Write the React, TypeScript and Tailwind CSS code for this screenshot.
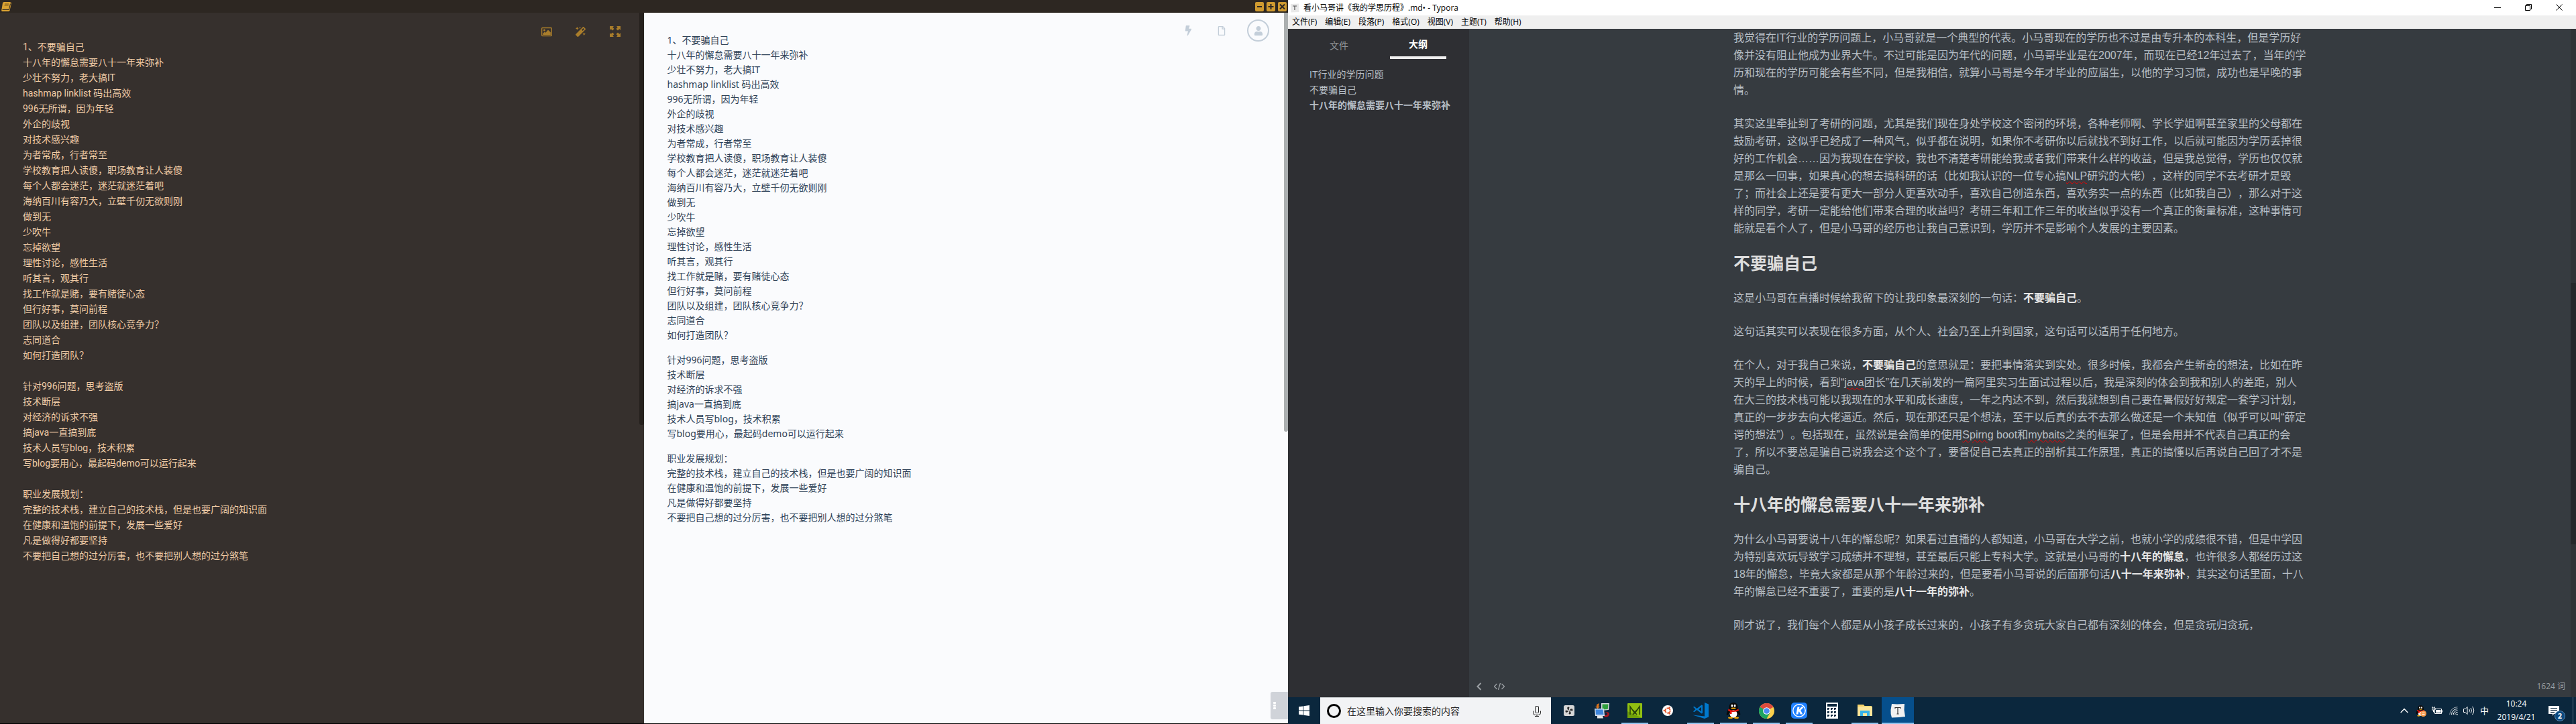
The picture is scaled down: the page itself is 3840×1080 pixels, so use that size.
import type { ReactNode } from "react";
import { FaBolt, FaMagic, FaRegFile, FaUser } from "react-icons/fa";

const noteGroups: string[][] = [
  [
    "1、不要骗自己",
    "十八年的懈怠需要八十一年来弥补",
    "少壮不努力，老大搞IT",
    "hashmap linklist 码出高效",
    "996无所谓，因为年轻",
    "外企的歧视",
    "对技术感兴趣",
    "为者常成，行者常至",
    "学校教育把人读傻，职场教育让人装傻",
    "每个人都会迷茫，迷茫就迷茫着吧",
    "海纳百川有容乃大，立壁千仞无欲则刚",
    "做到无",
    "少吹牛",
    "忘掉欲望",
    "理性讨论，感性生活",
    "听其言，观其行",
    "找工作就是赌，要有赌徒心态",
    "但行好事，莫问前程",
    "团队以及组建，团队核心竞争力？",
    "志同道合",
    "如何打造团队？",
  ],
  [
    "针对996问题，思考盗版",
    "技术断层",
    "对经济的诉求不强",
    "搞java一直搞到底",
    "技术人员写blog，技术积累",
    "写blog要用心，最起码demo可以运行起来",
  ],
  [
    "职业发展规划：",
    "完整的技术栈，建立自己的技术栈，但是也要广阔的知识面",
    "在健康和温饱的前提下，发展一些爱好",
    "凡是做得好都要坚持",
    "不要把自己想的过分厉害，也不要把别人想的过分煞笔",
  ],
];

const noteText = noteGroups.map((group) => group.join("\n")).join("\n\n");

const IconButton = ({ label, className = "", children }: { label: string; className?: string; children: ReactNode }) => (
  <button type="button" aria-label={label} className={`flex items-center justify-center ${className}`}>
    {children}
  </button>
);

function PictureIcon() {
  return (
    <svg viewBox="0 0 18 15" className="h-[15px] w-[18px]" fill="currentColor">
      <rect x="0.75" y="0.75" width="16.5" height="13.5" rx="1.2" fill="none" stroke="currentColor" strokeWidth="1.5" />
      <circle cx="5" cy="4.8" r="1.7" />
      <path d="M2.6 12.5V10l3-2.6 1.6 1.4 4-4.6 4.4 4.2v4.1z" />
    </svg>
  );
}

function ExpandIcon() {
  return (
    <svg viewBox="0 0 16 16" className="size-[16px]" fill="currentColor">
      <path d="M0 0h6L4.300 1.700 6.500 4 4 6.500 1.700 4.300 0 6zM16 0v6l-1.700-1.700L12 6.500 9.500 4l2.200-2.300L10 0zM0 16v-6l1.700 1.700L4 9.500 6.500 12l-2.200 2.300L6 16zM16 16h-6l1.700-1.700L9.500 12 12 9.500l2.300 2.200L16 10z" />
    </svg>
  );
}

function NotesWindow() {
  return (
    <section className="flex min-w-0 flex-1 flex-col border-b border-black bg-[#2d2722]">
      <header className="flex h-[19px] shrink-0 items-center justify-between px-[2px]">
        <svg viewBox="0 0 15 14" className="h-[14px] w-[15px]" aria-hidden="true">
          <path d="M4 0h8.500l2.500 1-2.500 12-1.500 1H1.500Q0 14 .2 12.500L2 1.500Q2.300 0 4 0z" fill="#d9a233" />
          <path d="M5 3h6M4.600 5h6" stroke="#7b5a20" strokeWidth="1" />
          <path d="M1.500 11.500h10l2-9" stroke="#2d2722" strokeWidth="1" fill="none" />
        </svg>
        <div className="flex gap-[4px]">
          {[
            { label: "最小化", d: "M3 7h7" },
            { label: "最大化", d: "M2.500 7h8M6.500 3v8" },
            { label: "关闭", d: "M3 3.500l7 7M10 3.500l-7 7" },
          ].map((control) => (
            <IconButton key={control.label} label={control.label} className="h-[14px] w-[13px] rounded-[2px] bg-[#cf9a30]">
              <svg viewBox="0 0 13 14" className="h-[14px] w-[13px]">
                <path d={control.d} stroke="#2d2722" strokeWidth="2" fill="none" />
              </svg>
            </IconButton>
          ))}
        </div>
      </header>

      <div className="flex min-h-0 flex-1">
        <div className="relative flex flex-1 bg-[#36302d]">
          <textarea
            aria-label="编辑笔记"
            defaultValue={noteText}
            spellCheck={false}
            className="flex-1 resize-none overflow-hidden bg-transparent pt-[40px] pl-[34px] font-[Roboto,'Noto_Sans_CJK_SC',sans-serif] text-[14px] leading-[23px] text-[#efcba6] outline-none"
          />
          <div className="absolute top-[20px] right-[35px] flex gap-[35px] text-[#a97d2b]">
            <IconButton label="插入图片" className="w-[16px]">
              <PictureIcon />
            </IconButton>
            <IconButton label="格式化" className="w-[16px]">
              <FaMagic className="size-[15px]" />
            </IconButton>
            <IconButton label="全屏" className="w-[16px]">
              <ExpandIcon />
            </IconButton>
          </div>
          <div className="w-[7px]">
            <div className="h-[58%] rounded-b bg-[#25211e]" />
          </div>
        </div>

        <div className="relative flex flex-1 border-l border-[#e6edfb] bg-[#fafbfd]">
          <div className="flex flex-1 flex-col gap-[15px] pt-[30px] pl-[34px] font-['Noto_Sans','Noto_Sans_CJK_SC',sans-serif] text-[14px] leading-[22px] text-[#2f4257]">
            {noteGroups.map((group) => (
              <p key={group[0]}>
                {group.map((line) => (
                  <span key={line} className="block whitespace-nowrap">
                    {line}
                  </span>
                ))}
              </p>
            ))}
          </div>
          <div className="absolute top-[10px] right-[28px] flex items-center text-[#c3ced9]">
            <IconButton label="快捷操作" className="w-[50px]">
              <FaBolt className="h-[15px] w-[13px]" />
            </IconButton>
            <IconButton label="新建文件" className="w-[50px]">
              <FaRegFile className="h-[14px] w-[12px]" />
            </IconButton>
            <IconButton label="账户" className="ml-[13px] size-[33px] rounded-full border-2 border-[#c3ced9]">
              <FaUser className="size-[14px]" />
            </IconButton>
          </div>
          <div className="w-[6px]">
            <div className="h-[59%] rounded-b bg-[#abafb0]" />
          </div>
          <button
            type="button"
            aria-label="目录"
            className="absolute right-0 bottom-[6px] flex h-[41px] w-[26px] flex-col items-start justify-center gap-px rounded-l-[3px] bg-[#d0d3d9] pl-[4px]"
          >
            {[0, 1, 2].map((dot) => (
              <span key={dot} className="h-[3px] w-[4px] rounded-[1px] bg-white" />
            ))}
          </button>
        </div>
      </div>
    </section>
  );
}

const B = ({ children }: { children: ReactNode }) => <strong className="font-bold text-[#e6e6e6]">{children}</strong>;

const Misspelt = ({ children }: { children: ReactNode }) => (
  <span className="underline decoration-[#f00000] decoration-wavy decoration-1 underline-offset-2">{children}</span>
);

const Paragraph = ({ lines }: { lines: ReactNode[] }) => (
  <p>
    {lines.map((line, index) => (
      <span key={index} className="block whitespace-nowrap">
        {line}
      </span>
    ))}
  </p>
);

const Heading = ({ id, children }: { id: string; children: ReactNode }) => (
  <h2 id={id} className="text-[25px] leading-[30px] font-bold text-[#dedede]">
    {children}
  </h2>
);

function Article() {
  return (
    <article
      id="it"
      className="mx-auto flex w-full max-w-[914px] flex-col gap-[24px] px-[30px] pt-px font-['Liberation_Sans','Noto_Sans_CJK_SC',sans-serif] text-[16px] leading-[26px] text-[#b8bfc6]"
    >
      <Paragraph
        lines={[
          "我觉得在IT行业的学历问题上，小马哥就是一个典型的代表。小马哥现在的学历也不过是由专升本的本科生，但是学历好",
          "像并没有阻止他成为业界大牛。不过可能是因为年代的问题，小马哥毕业是在2007年，而现在已经12年过去了，当年的学",
          "历和现在的学历可能会有些不同，但是我相信，就算小马哥是今年才毕业的应届生，以他的学习习惯，成功也是早晚的事",
          "情。",
        ]}
      />
      <Paragraph
        lines={[
          "其实这里牵扯到了考研的问题，尤其是我们现在身处学校这个密闭的环境，各种老师啊、学长学姐啊甚至家里的父母都在",
          "鼓励考研，这似乎已经成了一种风气，似乎都在说明，如果你不考研你以后就找不到好工作，以后就可能因为学历丢掉很",
          "好的工作机会……因为我现在在学校，我也不清楚考研能给我或者我们带来什么样的收益，但是我总觉得，学历也仅仅就",
          <>
            是那么一回事，如果真心的想去搞科研的话（比如我认识的一位专心搞<Misspelt>NLP</Misspelt>研究的大佬），这样的同学不去考研才是毁
          </>,
          "了；而社会上还是要有更大一部分人更喜欢动手，喜欢自己创造东西，喜欢务实一点的东西（比如我自己），那么对于这",
          "样的同学，考研一定能给他们带来合理的收益吗？考研三年和工作三年的收益似乎没有一个真正的衡量标准，这种事情可",
          "能就是看个人了，但是小马哥的经历也让我自己意识到，学历并不是影响个人发展的主要因素。",
        ]}
      />
      <Heading id="honest">不要骗自己</Heading>
      <Paragraph
        lines={[
          <>
            这是小马哥在直播时候给我留下的让我印象最深刻的一句话：<B>不要骗自己</B>。
          </>,
        ]}
      />
      <Paragraph lines={["这句话其实可以表现在很多方面，从个人、社会乃至上升到国家，这句话可以适用于任何地方。"]} />
      <Paragraph
        lines={[
          <>
            在个人，对于我自己来说，<B>不要骗自己</B>的意思就是：要把事情落实到实处。很多时候，我都会产生新奇的想法，比如在昨
          </>,
          <>
            天的早上的时候，看到“<Misspelt>java</Misspelt>团长”在几天前发的一篇阿里实习生面试过程以后，我是深刻的体会到我和别人的差距，别人
          </>,
          "在大三的技术栈可能以我现在的水平和成长速度，一年之内达不到，然后我就想到自己要在暑假好好规定一套学习计划，",
          "真正的一步步去向大佬逼近。然后，现在那还只是个想法，至于以后真的去不去那么做还是一个未知值（似乎可以叫“薛定",
          <>
            谔的想法”）。包括现在，虽然说是会简单的使用<Misspelt>Spirng</Misspelt> boot和<Misspelt>mybaits</Misspelt>
            之类的框架了，但是会用并不代表自己真正的会
          </>,
          "了，所以不要总是骗自己说我会这个这个了，要督促自己去真正的剖析其工作原理，真正的搞懂以后再说自己回了才不是",
          "骗自己。",
        ]}
      />
      <Heading id="effort">十八年的懈怠需要八十一年来弥补</Heading>
      <Paragraph
        lines={[
          "为什么小马哥要说十八年的懈怠呢？如果看过直播的人都知道，小马哥在大学之前，也就小学的成绩很不错，但是中学因",
          <>
            为特别喜欢玩导致学习成绩并不理想，甚至最后只能上专科大学。这就是小马哥的<B>十八年的懈怠</B>，也许很多人都经历过这
          </>,
          <>
            18年的懈怠，毕竟大家都是从那个年龄过来的，但是要看小马哥说的后面那句话<B>八十一年来弥补</B>，其实这句话里面，十八
          </>,
          <>
            年的懈怠已经不重要了，重要的是<B>八十一年的弥补</B>。
          </>,
        ]}
      />
      <Paragraph lines={["刚才说了，我们每个人都是从小孩子成长过来的，小孩子有多贪玩大家自己都有深刻的体会，但是贪玩归贪玩，"]} />
    </article>
  );
}

function TyporaWindow() {
  return (
    <section className="flex min-h-0 flex-1 flex-col bg-white font-['Open_Sans','Noto_Sans_CJK_SC',sans-serif]">
      <header className="flex h-[23px] shrink-0 items-center justify-between pl-[3px] text-[12px] text-black">
        <div className="flex items-center gap-[6px]">
          <svg viewBox="0 0 14 14" className="size-[14px]" aria-hidden="true">
            <path d="M1 1l12-.5L13.500 13l-12 .5z" fill="#e9e9e9" />
            <path d="M4 4h6M7 4v6" stroke="#555" strokeWidth="1.200" />
          </svg>
          <h1>看小马哥讲《我的学思历程》.md• - Typora</h1>
        </div>
        <div className="flex pr-[2px] pb-[2px]">
          {[
            { label: "最小化", d: "M0 5.500h10" },
            { label: "还原", d: "M.5 2.500h7v7h-7zM2.500 2.500v-2h7v7h-2" },
            { label: "关闭", d: "M.5 .5l9 9M9.500 .5l-9 9" },
          ].map((control) => (
            <IconButton key={control.label} label={control.label} className="h-[20px] w-[46px]">
              <svg viewBox="0 0 10 10" className="size-[10px]">
                <path d={control.d} stroke="#000" strokeWidth="1" fill="none" />
              </svg>
            </IconButton>
          ))}
        </div>
      </header>
      <nav className="flex h-[20px] shrink-0 items-center gap-[12px] bg-[#efefef] pl-[6px] text-[12px] text-black">
        {["文件(F)", "编辑(E)", "段落(P)", "格式(O)", "视图(V)", "主题(T)", "帮助(H)"].map((menu) => (
          <button key={menu} type="button">
            {menu}
          </button>
        ))}
      </nav>

      <div className="flex min-h-0 flex-1">
        <aside className="w-[270px] shrink-0 bg-[#2e2f33] font-['Liberation_Sans','Noto_Sans_CJK_SC',sans-serif] text-[14px]">
          <div className="flex px-[17px] pt-[5px]">
            <button type="button" className="flex h-[40px] flex-1 items-center justify-center text-[#8f9499]">
              文件
            </button>
            <button type="button" className="flex h-[40px] flex-1 flex-col items-center font-bold text-white">
              <span className="leading-[36px]">大纲</span>
              <span className="h-[4px] w-[84px] bg-[#eeeeee]" />
            </button>
          </div>
          <ul className="pt-[12px] pl-[32px] leading-[23px] text-[#b8bfc6]">
            <li>
              <a href="#it">IT行业的学历问题</a>
            </li>
            <li>
              <a href="#honest">不要骗自己</a>
            </li>
            <li>
              <a href="#effort" className="font-bold">
                十八年的懈怠需要八十一年来弥补
              </a>
            </li>
          </ul>
        </aside>

        <div className="flex min-w-0 flex-1 bg-[#363b40]">
          <div className="flex min-w-0 flex-1 flex-col justify-between">
            <Article />
            <footer className="flex h-[32px] items-center pr-[8px] pl-[10px] text-[12px] text-[#9a9fa3]">
              <IconButton label="收起侧栏" className="w-[10px]">
                <svg viewBox="0 0 8 12" className="h-[12px] w-[8px]">
                  <path d="M6.500 1l-5 5 5 5" stroke="currentColor" strokeWidth="2" fill="none" />
                </svg>
              </IconButton>
              <IconButton label="源代码模式" className="ml-[17px] w-[16px]">
                <svg viewBox="0 0 16 12" className="h-[12px] w-[16px]">
                  <path d="M4.500 2l-4 4 4 4M11.500 2l4 4-4 4M9.500 1l-3 10" stroke="currentColor" strokeWidth="1.300" fill="none" />
                </svg>
              </IconButton>
              <span className="ml-auto">1624 词</span>
            </footer>
          </div>
          <div className="w-[8px] bg-[#303336] pt-[379px]">
            <div className="h-[390px] bg-[#26282a]" />
          </div>
        </div>
      </div>
    </section>
  );
}

const apps: { label: string; running?: boolean; active?: boolean; icon: ReactNode }[] = [
  {
    label: "风扇",
    icon: (
      <svg viewBox="0 0 16 16" className="size-[16px]">
        <rect width="16" height="16" rx="2.500" fill="#d6d6d6" />
        <g fill="#2a2a2a">
          <path d="M7.700 7.500Q4.500 6 5.500 3q2.500-1.200 3 .5Q7.500 5 7.700 7.500z" />
          <path d="M8.500 7.700Q10 4.500 13 5.500q1.200 2.500-.5 3Q11 7.500 8.500 7.700z" />
          <path d="M8.300 8.500Q11.500 10 10.500 13q-2.500 1.200-3-.5Q8.500 11 8.300 8.500z" />
          <path d="M7.500 8.300Q6 11.500 3 10.500q-1.200-2.500.5-3Q5 8.500 7.500 8.300z" />
        </g>
      </svg>
    ),
  },
  {
    label: "远程连接",
    icon: (
      <svg viewBox="0 0 24 24" className="size-[24px]">
        <path d="M11 1h12l-1 10-11 1z" fill="#d9dde0" />
        <path d="M12.500 2.500h9l-.8 7.500-8.200.5z" fill="#2f9e3c" />
        <path d="M16 16q6-4 7 1-1 6-8 4l1-2q5 0 4-3z" fill="#b01820" />
        <path d="M1 9h14l1 11H2z" fill="#cfdcec" />
        <path d="M2.500 10.500h11l1 7.500H3z" fill="#3f86dc" />
        <path d="M5 20h8l1 3.500H5z" fill="#e6e6e6" />
        <path d="M8 1L4 3v3H2l3.500 3L9 6H7z" fill="#d9721c" />
      </svg>
    ),
  },
  {
    label: "M",
    running: true,
    icon: (
      <svg viewBox="0 0 22 22" className="size-[22px]">
        <rect width="22" height="22" rx="1" fill="#91c011" />
        <path d="M0 12L22 22H0z" fill="#6fa00a" />
        <path d="M4 17V5l7 10 7-10v12M8 17l6-7M8 10l6 7" stroke="#25400a" strokeWidth="1.500" fill="none" />
      </svg>
    ),
  },
  {
    label: "Ubuntu",
    icon: (
      <svg viewBox="0 0 16 16" className="size-[16px]">
        <circle cx="8" cy="8" r="8" fill="#fff" />
        <circle cx="8" cy="8" r="3.700" fill="none" stroke="#e2532a" strokeWidth="1.800" strokeDasharray="6.500 1.250" />
        <circle cx="2.800" cy="8" r="1.200" fill="#e2532a" />
        <circle cx="10.600" cy="3.400" r="1.200" fill="#e2532a" />
        <circle cx="10.600" cy="12.600" r="1.200" fill="#e2532a" />
      </svg>
    ),
  },
  {
    label: "Visual Studio Code",
    running: true,
    icon: (
      <svg viewBox="0 0 24 24" className="size-[24px]" fill="#0078cc">
        <path d="M18 0l6 2.500v19L18 24 0 18.500l18 2z" />
        <path d="M2.500 5.800L6.500 9l7-5.500 1.500.8v11.400l-1.500.8-7-5.500-4 3.200L1 13.300 4.500 10 1 6.700zM13 6.800L9 10l4 3.200z" fillRule="evenodd" />
      </svg>
    ),
  },
  {
    label: "QQ",
    running: true,
    icon: <PenguinIcon className="h-[24px] w-[22px]" />,
  },
  {
    label: "Chrome",
    running: true,
    icon: (
      <svg viewBox="0 0 24 24" className="size-[23px]">
        <circle cx="12" cy="12" r="12" fill="#fcd04b" />
        <path d="M12 12L1.600 6A12 12 0 0 1 22.400 6z" fill="#dc4b3e" />
        <path d="M12 6h10.400q-5-6-10.400-6z" fill="#dc4b3e" />
        <path d="M1.600 6A12 12 0 0 0 12 24l5.200-9L12 12z" fill="#1da462" />
        <path d="M1.600 6l5.200 9L12 12z" fill="#1da462" />
        <circle cx="12" cy="12" r="5.600" fill="#fff" />
        <circle cx="12" cy="12" r="4.500" fill="#4a8af4" />
      </svg>
    ),
  },
  {
    label: "酷狗音乐",
    running: true,
    icon: (
      <svg viewBox="0 0 24 24" className="size-[24px]">
        <rect width="24" height="24" rx="5" fill="#1e80ff" />
        <circle cx="12" cy="12" r="9.200" fill="none" stroke="#fff" strokeWidth="1.500" />
        <path d="M9.500 6.500h3l-.8 4 3.700-4H19l-4.800 5 3 6h-3.300l-2-4.300-.8.800-.700 3.500h-3z" fill="#fff" />
      </svg>
    ),
  },
  {
    label: "计算器",
    icon: (
      <svg viewBox="0 0 18 24" className="h-[24px] w-[18px]">
        <path d="M0 0h18v24H0z" fill="#fff" />
        <path d="M2 2h14v4H2z" fill="#0b273d" />
        {[8, 13, 18].map((y) =>
          [2, 7, 12].map((x) => <path key={`${x}-${y}`} d={`M${x} ${y}h3v1.500l-1.500 1.500h-1.500z`} fill="#0b273d" />),
        )}
      </svg>
    ),
  },
  {
    label: "文件资源管理器",
    running: true,
    icon: (
      <svg viewBox="0 0 22 20" className="h-[20px] w-[22px]">
        <path d="M0 1h9l1.500 2H21v15H0z" fill="#f6d268" />
        <path d="M0 4h22v14H0z" fill="#fde69a" />
        <path d="M4 18v-8h14v8h-4v-4H8v4z" fill="#35b2ea" />
      </svg>
    ),
  },
  {
    label: "Typora",
    running: true,
    active: true,
    icon: (
      <svg viewBox="0 0 22 22" className="size-[22px]">
        <path d="M2 1l8 .5L21 1l-.5 9L22 20l-9 1-11 .5Q0 16 .5 10z" fill="#f1f1f1" />
        <path d="M7 8V6.500h8V8M11 6.500V16M9.500 16h3" stroke="#333" strokeWidth="1.200" fill="none" />
      </svg>
    ),
  },
];

function PenguinIcon({ className }: { className: string }) {
  return (
    <svg viewBox="0 0 22 24" className={className}>
      <path d="M11 0C6 0 4 4 4.500 9Q0 14 1 19q2 0 3-2 1 6 7 6t7-6q1 2 3 2 1-5-3.500-10C18 4 16 0 11 0z" fill="#0a0a0a" />
      <ellipse cx="11" cy="17" rx="5.500" ry="5.800" fill="#fff" />
      <path d="M3.500 9.500q7.500 4.500 15 0l.5 2.500q-4 2.500-10.500 2V17H6v-3.500L3 12z" fill="#e8140f" />
      <ellipse cx="8.900" cy="4.800" rx="1.400" ry="2" fill="#fff" />
      <ellipse cx="13.100" cy="4.800" rx="1.400" ry="2" fill="#fff" />
      <ellipse cx="11" cy="8.500" rx="3.500" ry="1" fill="#f9a800" />
      <ellipse cx="6.500" cy="22.800" rx="3.500" ry="1.200" fill="#f9a800" />
      <ellipse cx="15.500" cy="22.800" rx="3.500" ry="1.200" fill="#f9a800" />
    </svg>
  );
}

function Tray() {
  return (
    <div className="ml-auto flex items-center font-['Open_Sans','Noto_Sans_CJK_SC',sans-serif] text-white">
      <IconButton label="显示隐藏的图标" className="w-[24px]">
        <svg viewBox="0 0 12 8" className="h-[8px] w-[12px]">
          <path d="M.7 7L6 1.500 11.300 7" stroke="currentColor" strokeWidth="1.400" fill="none" />
        </svg>
      </IconButton>
      <IconButton label="QQ" className="relative w-[24px]">
        <PenguinIcon className="h-[17px] w-[15px]" />
        <svg viewBox="0 0 9 9" className="absolute right-[3px] bottom-0 size-[9px]">
          <circle cx="4.500" cy="4.500" r="4.500" fill="#f79a4c" />
          <path d="M2.500 3.500h4M2.500 5.500h4" stroke="#fff" />
        </svg>
      </IconButton>
      <IconButton label="电池" className="w-[25px]">
        <svg viewBox="0 0 16 12" className="h-[12px] w-[16px]">
          <path d="M4.500 3.500h10v7h-10zM15.500 5.500v3" stroke="#fff" fill="none" />
          <path d="M6 5h7.500v4H6z" fill="#fff" />
          <path d="M0 2h5v3H0zM1 0v2M4 0v2M2.500 5v3h2" stroke="#fff" fill="none" />
        </svg>
      </IconButton>
      <IconButton label="网络" className="w-[24px]">
        <svg viewBox="0 0 13 13" className="size-[13px]" fill="none" stroke="#fff">
          <path d="M.7 12A11.500 11.500 0 0 1 12.500.7" strokeOpacity=".6" />
          <path d="M3.500 12a8.500 8.500 0 0 1 9-8.500M6.200 12a6 6 0 0 1 6.300-6M8.700 12a3.500 3.500 0 0 1 3.800-3.500" />
          <circle cx="11.700" cy="11.700" r="1" fill="#fff" stroke="none" />
        </svg>
      </IconButton>
      <IconButton label="音量" className="w-[23px]">
        <svg viewBox="0 0 17 14" className="h-[14px] w-[17px]" fill="none" stroke="#fff">
          <path d="M.5 4.500h2.500l3-3v11l-3-3H.500zM8.500 4.500q2 2.500 0 5M11 3q3 4 0 8M13.500 1q4.500 6 0 12" />
        </svg>
      </IconButton>
      <button type="button" className="w-[23px] text-[13px] leading-[20px]">
        中
      </button>
      <button type="button" className="w-[72px] text-center text-[12px] leading-[20px]">
        <span className="block">10:24</span>
        <span className="block">2019/4/21</span>
      </button>
      <button type="button" aria-label="通知" className="relative flex h-[40px] w-[48px] items-center justify-center pr-[8px]">
        <svg viewBox="0 0 16 15" className="h-[15px] w-[16px]">
          <path d="M0 0h16v12H8l-2 3v-3H0z" fill="#fff" />
          <path d="M3 3.500h10M3 6.500h10M3 9.500h6" stroke="#0b273d" />
        </svg>
        <span className="absolute right-[11px] bottom-[4px] flex size-[16px] items-center justify-center rounded-full border border-[#5c8db8] bg-[#0b4a80] text-[11px] font-bold">
          2
        </span>
      </button>
      <span className="h-[40px] w-px bg-[#5a6f80]" />
      <span className="w-[4px]" />
    </div>
  );
}

function Taskbar() {
  return (
    <div className="flex h-[40px] shrink-0 bg-[#0b273d]">
      <IconButton label="开始" className="w-[48px]">
        <svg viewBox="0 0 16 16" className="size-[16px]" fill="#fff">
          <path d="M0 2.300L6.500 1.400v6.200H0zM7.300 1.300L16 0v7.600H7.300zM0 8.400h6.500v6.200L0 13.700zM7.300 8.400H16V16l-8.700-1.300z" />
        </svg>
      </IconButton>
      <label className="mr-[3px] flex w-[344px] items-center border-t border-[#c3c7ca] bg-[#f2f3f5] pr-[15px] pl-[10px]">
        <span className="size-[21px] rounded-full border-[3px] border-black" />
        <input
          type="text"
          aria-label="搜索"
          placeholder="在这里输入你要搜索的内容"
          className="min-w-0 flex-1 bg-transparent pl-[9px] font-['Noto_Sans_CJK_SC',sans-serif] text-[14px] outline-none placeholder:text-[#2b2b2b]"
        />
        <svg viewBox="0 0 12 16" className="h-[16px] w-[12px]" fill="none" stroke="#222">
          <rect x="3.500" y=".5" width="5" height="10" rx="1" />
          <path d="M.5 7.500v3q0 3 3 3h5q3 0 3-3v-3M6 13.500v2M3 15.500h6" />
        </svg>
      </label>
      <div className="flex gap-px">
        {apps.map((app) => (
          <button
            key={app.label}
            type="button"
            aria-label={app.label}
            className={`relative flex w-[48px] items-center justify-center ${app.active ? "bg-[#064f8c]" : ""}`}
          >
            {app.icon}
            {app.running && (
              <span className={`absolute bottom-0 h-[2px] bg-[#8fc4ee] ${app.active ? "w-[48px]" : "w-[40px]"}`} />
            )}
          </button>
        ))}
      </div>
      <Tray />
    </div>
  );
}

export default function App() {
  return (
    <div className="flex h-screen overflow-hidden [text-spacing-trim:space-all]">
      <NotesWindow />
      <div className="flex min-w-0 flex-1 flex-col">
        <TyporaWindow />
        <Taskbar />
      </div>
    </div>
  );
}
